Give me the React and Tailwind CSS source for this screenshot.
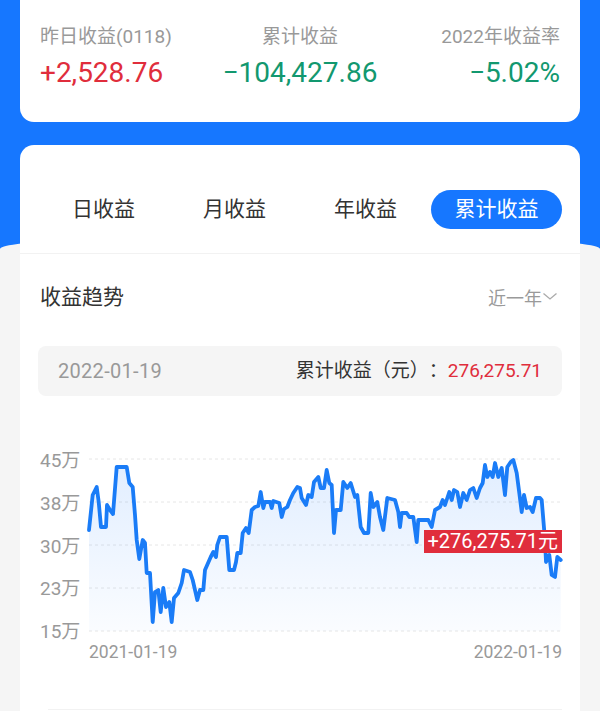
import React from "react";

const PTS = [
  [0, 90], [3.7, 55], [7.7, 47], [9.7, 62], [12, 87], [17, 87], [18, 65], [21, 70], [24, 74],
  [27.7, 27], [37.7, 27], [40.3, 43], [43.7, 47], [46, 75], [47.7, 100], [50.3, 119], [53.7, 100],
  [56, 103], [57.7, 133], [61, 133], [63.7, 182], [66, 152], [69.3, 150], [71.7, 172], [74.3, 148],
  [77, 167], [80.3, 162], [82.7, 182], [85, 158], [89.3, 153], [92.7, 143], [95, 130], [101, 132],
  [103.7, 140], [108.3, 160], [111, 150], [114.3, 150], [116, 130], [121.7, 117], [124.3, 112],
  [127, 117], [128.3, 105], [131, 97], [137.7, 97], [140.3, 130], [145, 130], [147, 122],
  [148.3, 113], [151.7, 113], [153.7, 93], [157, 88], [159.7, 93], [162.7, 70], [166, 67],
  [169.3, 66], [171.7, 52], [174.3, 68], [176, 62], [181, 62], [182.7, 68], [184.3, 61], [190.3, 63],
  [192.7, 77], [195, 69], [198.3, 67], [201, 60], [204.3, 53], [208.3, 47], [211, 48], [212.7, 58],
  [217, 65], [219.3, 55], [222.7, 57], [225, 42], [229.3, 37], [231.7, 48], [235, 48], [237.7, 30],
  [240.3, 43], [242.7, 45], [245, 93], [247, 70], [251.7, 70], [254.3, 42], [258.3, 48], [261.7, 43],
  [266, 57], [268.3, 55], [271.7, 87], [275, 93], [279.3, 93], [281.7, 53], [284.3, 67], [288.3, 62],
  [291, 77], [294.3, 90], [298.3, 58], [306, 60], [309.3, 72], [311, 87], [312.7, 73], [317.7, 73],
  [320.3, 77], [324.3, 77], [327.7, 102], [329.3, 80], [339.3, 80], [342.7, 87], [346, 70], [351, 67],
  [353.7, 60], [356, 65], [360.3, 52], [362.7, 60], [365, 50], [368.3, 52], [371, 67], [374.3, 53],
  [377.7, 60], [381, 50], [384.3, 48], [387.7, 58], [391, 48], [393.7, 43], [396, 25], [398.3, 37],
  [401, 32], [403.7, 37], [406, 23], [409.3, 37], [412.7, 28], [416, 55], [418.3, 27], [421.7, 22],
  [424.3, 20], [427.7, 33], [430.3, 53], [432.7, 72], [435, 55], [437.7, 68], [441, 67], [443.7, 72],
  [447, 58], [451, 58], [452.7, 60], [456, 100], [457, 122], [460.3, 115], [462.7, 135], [466, 137],
  [468.3, 117], [471.7, 120],
];

const linePath = PTS.map((p, i) => (i === 0 ? "M" : "L") + p[0] + " " + p[1]).join(" ");
const areaPath = linePath + " L471.7 191 L0 191 Z";

function Chart() {
  const grid = [19, 62, 105, 148, 191];
  return (
    <svg width="473" height="200" viewBox="0 0 473 200" className="block overflow-visible">
      <defs>
        <linearGradient id="areaFill" x1="0" y1="0" x2="0" y2="1">
          <stop offset="0%" stopColor="#1677ff" stopOpacity="0.13" />
          <stop offset="100%" stopColor="#1677ff" stopOpacity="0.02" />
        </linearGradient>
      </defs>
      {grid.map((y) => (
        <line key={y} x1="0" x2="473" y1={y} y2={y} stroke="#e6e6e6" strokeWidth="1" strokeDasharray="3 3" />
      ))}
      <path d={areaPath} fill="url(#areaFill)" />
      <path d={linePath} fill="none" stroke="#1a7cf7" strokeWidth="3.8" strokeLinejoin="round" strokeLinecap="round" />
    </svg>
  );
}

export default function App() {
  const tabs = ["日收益", "月收益", "年收益", "累计收益"];
  return (
    <div className="relative min-h-[711px] h-[711px] overflow-hidden bg-[#f5f5f5] font-[Roboto,'Noto_Sans_CJK_SC',sans-serif]">
      <div className="absolute inset-x-0 top-0 h-[260px] bg-[#1677ff]" />
      <div className="absolute inset-x-0 top-[234px] h-[600px] bg-[#f5f5f5] rounded-tl-[300px_15px] rounded-tr-[300px_15px]" />

      <div className="relative px-5">
        {/* summary card */}
        <div className="grid h-[122px] grid-cols-3 rounded-b-[14px] bg-white px-5 pt-[24px]">
          <div className="flex flex-col items-start">
            <div className="text-[19px] leading-[26px] text-[#999]">昨日收益(0118)</div>
            <div className="mt-[5px] text-[28px] leading-[36px] text-[#e02d3c]">+2,528.76</div>
          </div>
          <div className="flex flex-col items-center">
            <div className="text-[19px] leading-[26px] text-[#999]">累计收益</div>
            <div className="mt-[5px] whitespace-nowrap text-[28px] leading-[36px] text-[#12986f]">−104,427.86</div>
          </div>
          <div className="flex flex-col items-end">
            <div className="text-[19px] leading-[26px] text-[#999]">2022年收益率</div>
            <div className="mt-[5px] text-[28px] leading-[36px] text-[#12986f]">−5.02%</div>
          </div>
        </div>

        {/* main card */}
        <div className="mt-[23px] h-[600px] rounded-t-[14px] bg-white">
          <div className="grid grid-cols-4 border-b border-[#f2f2f2] px-[18px] pt-[45px] pb-[24px]">
            {tabs.map((t, i) => (
              <div
                key={t}
                className={
                  i === 3
                    ? "flex h-[39px] items-center justify-center rounded-full bg-[#1677ff] text-[21px] text-white"
                    : "flex h-[39px] items-center justify-center text-[21px] text-[#333]"
                }
              >
                {t}
              </div>
            ))}
          </div>

          <div className="px-[18px]">
            <div className="mt-[29px] flex h-[30px] items-center justify-between pl-[2px]">
              <div className="text-[21px] text-[#333]">收益趋势</div>
              <div className="mr-[4px] flex items-center text-[18px] text-[#9a9a9a]">
                <span>近一年</span>
                <svg width="16" height="18" viewBox="0 0 16 18" className="-mt-[4px]">
                  <path d="M1.5 6.5 L8 12 L14.5 6.5" fill="none" stroke="#aaa" strokeWidth="1.3" />
                </svg>
              </div>
            </div>

            <div className="mt-[33px] flex h-[50px] items-center justify-between rounded-[8px] bg-[#f5f5f5] px-5 text-[19px]">
              <span className="text-[20px] tracking-[0.3px] text-[#999]">2022-01-19</span>
              <span className="text-[#333] [text-spacing-trim:space-all]">
                累计收益（元）：<span className="text-[#e02d3c]">276,275.71</span>
              </span>
            </div>

            <div className="mt-[44px] flex pl-[2px]">
              <div className="flex w-[49px] flex-col text-[19px] text-[#999]">
                {["45万", "38万", "30万", "23万", "15万"].map((l) => (
                  <div key={l} className="flex h-[42.75px] items-center">{l}</div>
                ))}
              </div>
              <div className="relative flex w-[473px] flex-col">
                <Chart />
                <div className="flex h-[24px] items-center justify-between text-[17.5px] leading-[24px] text-[#999]">
                  <span>2021-01-19</span>
                  <span>2022-01-19</span>
                </div>
                <div className="absolute right-0 top-[90px] flex h-[23px] items-center bg-[#e02d3c] px-[4px] text-[20px] leading-[23px] text-white">
                  +276,275.71元
                </div>
              </div>
            </div>

            <div className="ml-[10px] mt-[45px] h-px bg-[#f2f2f2]" />
          </div>
        </div>
      </div>
    </div>
  );
}
